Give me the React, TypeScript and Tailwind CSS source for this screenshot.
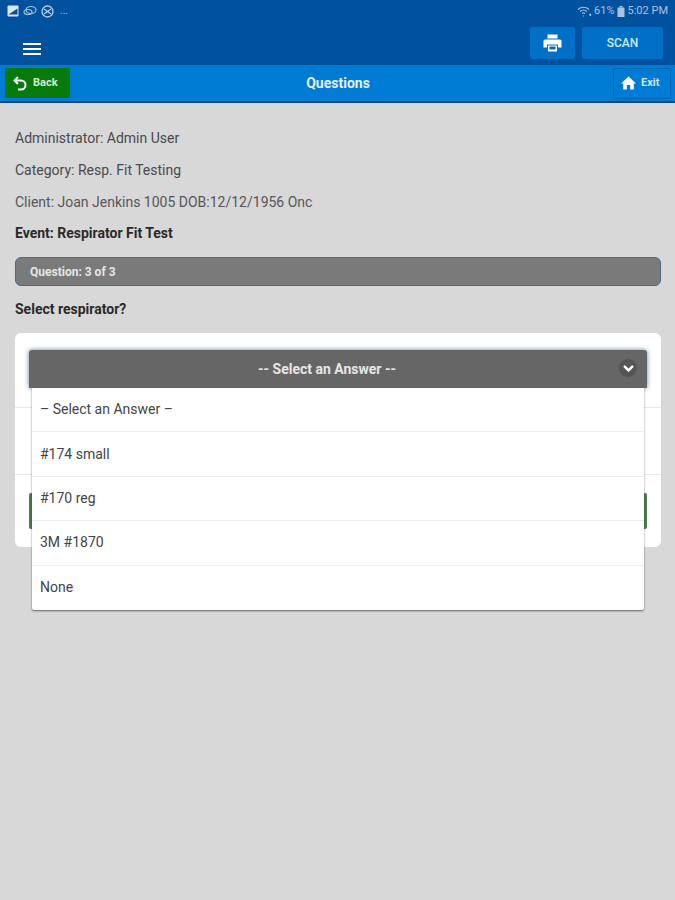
import { ChevronDown } from "lucide-react";

const options = ["– Select an Answer –", "#174 small", "#170 reg", "3M #1870", "None"];

function StatusBar() {
  return (
    <div className="flex h-[24px] items-center justify-between pl-[7px] pr-[7px] pb-[2px] text-[11px] text-[#a9c3e0]">
      <div className="flex items-center gap-[4px]">
        <svg width="12" height="12" viewBox="0 0 12 12">
          <rect x="0.5" y="0.5" width="11" height="11" rx="1" fill="#dbe6f3" />
          <path d="M1.5 9.5 L10.5 3.5 V9.5 Z" fill="#0d4f9a" />
        </svg>
        <svg width="14" height="12" viewBox="0 0 14 12" fill="none" stroke="#a9c3e0" strokeWidth="1.2">
          <ellipse cx="8" cy="5" rx="5" ry="3.5" />
          <ellipse cx="5" cy="7" rx="4" ry="2.5" />
        </svg>
        <svg width="13" height="13" viewBox="0 0 13 13" fill="none" stroke="#bdd0e7" strokeWidth="1.3">
          <circle cx="6.5" cy="6.5" r="5.5" />
          <path d="M3 4 L10 9 M3 9 L10 4" />
        </svg>
        <span className="ml-[2px] text-[10px] leading-none">...</span>
      </div>
      <div className="flex items-center gap-[2px]">
        <svg width="15" height="11" viewBox="0 0 15 11" fill="none" stroke="#a9c3e0" strokeWidth="1.1">
          <path d="M1 3.5 C4 0.5 9 0.5 12 3.5 M3 5.5 C5 3.5 8 3.5 10 5.5 M5 7.5 C6 6.5 7 6.5 8 7.5" />
          <path d="M6.5 9.5 L6.5 10.5 M12.5 8 L14 9.5 M14 8 L12.5 9.5" />
        </svg>
        <span>61%</span>
        <svg width="8" height="11" viewBox="0 0 8 11" fill="#a9c3e0">
          <rect x="2.5" y="0" width="3" height="1.5" />
          <rect x="0.5" y="1.5" width="7" height="9.5" rx="0.5" />
        </svg>
        <span className="ml-[1px]">5:02 PM</span>
      </div>
    </div>
  );
}

export default function App() {
  return (
    <div className="flex min-h-[900px] w-[675px] flex-col bg-[#d8d8d8] font-['Roboto',sans-serif] text-[#4a4a4a]">
      <header className="h-[65px] bg-[#00529f]">
        <StatusBar />
        <div className="flex h-[41px] items-start justify-between pl-[23px] pr-[12px] pt-[3px]">
          <div className="mt-[16px] flex w-[18px] flex-col gap-[3px]">
            <span className="h-[2px] bg-white" />
            <span className="h-[2px] bg-white" />
            <span className="h-[2px] bg-white" />
          </div>
          <div className="flex gap-[7px]">
            <button className="flex h-[32px] w-[45px] items-center justify-center rounded-[2px] bg-[#0070c6]">
              <svg width="19" height="18" viewBox="0 0 19 18" fill="white">
                <path d="M4.5 0.5 H14.5 V4.5 H4.5 Z" />
                <path d="M2 5.5 H17 A1.5 1.5 0 0 1 18.5 7 V13.5 H15 V10.5 H4 V13.5 H0.5 V7 A1.5 1.5 0 0 1 2 5.5 Z" />
                <path d="M5 11.5 H14 V17.5 H5 Z" />
                <rect x="6.5" y="12.5" width="6" height="3" fill="#0070c6" />
              </svg>
            </button>
            <button className="h-[32px] w-[81px] rounded-[2px] bg-[#0070c6] text-[12px] font-medium text-[#d5e8f6]">
              SCAN
            </button>
          </div>
        </div>
      </header>

      <div className="flex h-[38px] items-center border-b-2 border-[#00437f] bg-[#007bd3] pl-[5px] pr-[4px]">
        <div className="flex-1">
          <button className="flex h-[30px] w-[65px] items-center gap-[6px] rounded-[2px] bg-[#067a0b] pl-[8px] text-[11px] font-bold text-[#d5e8d5]">
            <svg width="14" height="15" viewBox="0 0 14 15" fill="none" stroke="white" strokeWidth="2">
              <path d="M5 1 L1.5 4.5 L5 8" />
              <path d="M2 4.5 H8 A4.5 4.5 0 0 1 8 13.5 H5" />
            </svg>
            Back
          </button>
        </div>
        <span className="text-[14px] font-bold text-[#e6f2fb]">Questions</span>
        <div className="flex flex-1 justify-end">
          <button className="flex h-[31px] w-[58px] items-center gap-[5px] rounded-[2px] border border-[#0068b6] pl-[7px] text-[11px] font-bold text-[#cfe5f6]">
            <svg width="15" height="14" viewBox="0 0 15 14" fill="white">
              <path d="M7.5 0.5 L15 7.5 H12.8 V13.5 H9.2 V9 H5.8 V13.5 H2.2 V7.5 H0 Z" />
            </svg>
            Exit
          </button>
        </div>
      </div>

      <main className="px-[15px] pt-[26px]">
        <p className="text-[14px] leading-[18px]">Administrator: Admin User</p>
        <p className="mt-[14px] text-[14px] leading-[18px]">Category: Resp. Fit Testing</p>
        <p className="mt-[14px] text-[14px] leading-[18px] text-[#565656]">Client: Joan Jenkins 1005 DOB:12/12/1956 Onc</p>
        <p className="mt-[13px] text-[14px] font-bold leading-[18px] text-[#2a2a2a]">Event: Respirator Fit Test</p>

        <div className="mt-[15px] flex h-[29px] w-[646px] items-center rounded-[6px] border border-[#4c6a88] bg-[#7a7a7a] pl-[14px] text-[12px] font-bold text-[#e6e6e6]">
          Question: 3 of 3
        </div>

        <p className="mt-[14px] text-[14px] font-bold leading-[18px] text-[#2a2a2a]">Select respirator?</p>

        <div className="relative mt-[15px] h-[214px] w-[646px] rounded-[6px] bg-white">
          <div className="px-[14px] pt-[17px]">
            <div className="flex h-[38px] items-center justify-center rounded-t-[3px] bg-[#666666] pr-[22px] text-[14px] font-bold text-[#e6e6e6] shadow-[0_0_5px_#5d7ea8]">
              -- Select an Answer --
            </div>
          </div>
          <div className="mt-[19px] border-t border-[#e8e8e8]" />
          <div className="mt-[66px] border-t border-[#e8e8e8]" />
          <div className="mx-[14px] mt-[18px] h-[36px] rounded-[2px] bg-[#4f7d4f]" />

          <span className="absolute right-[24px] top-[26px] flex h-[18px] w-[18px] items-center justify-center rounded-full bg-[#555555]">
            <ChevronDown className="h-[15px] w-[15px] text-white" strokeWidth={4} />
          </span>

          <ul className="absolute left-[17px] top-[55px] w-[612px] rounded-b-[2px] bg-white text-[14px] text-[#444444] shadow-[0_1px_2px_rgba(0,0,0,0.55)]">
            {options.map((option, i) => (
              <li
                key={option}
                className={`flex h-[44.4px] items-center pl-[8px] ${i < options.length - 1 ? "border-b border-[#eeeeee]" : ""}`}
              >
                {option}
              </li>
            ))}
          </ul>
        </div>
      </main>
    </div>
  );
}
